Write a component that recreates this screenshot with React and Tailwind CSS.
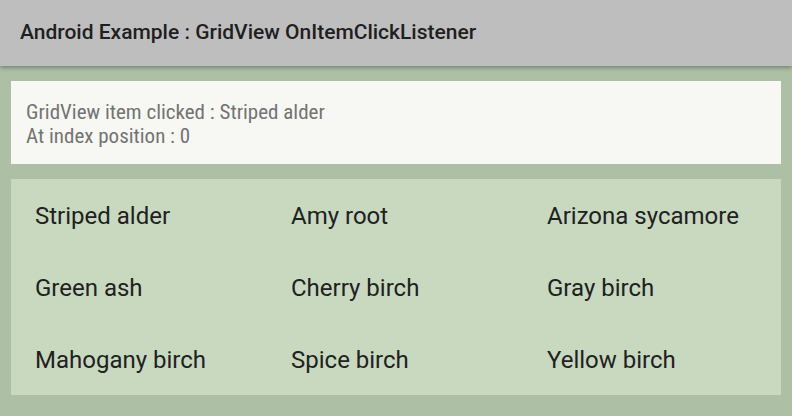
import React from "react";

const trees = [
  "Striped alder",
  "Amy root",
  "Arizona sycamore",
  "Green ash",
  "Cherry birch",
  "Gray birch",
  "Mahogany birch",
  "Spice birch",
  "Yellow birch",
];

export default function App() {
  return (
    <div className="w-[792px] h-[416px] bg-[#adc0a6] overflow-hidden font-['Roboto',sans-serif]">
      {/* Toolbar */}
      <div className="h-[66px] bg-[#bebebe] flex items-center pl-5 shadow-[0_2px_4px_rgba(0,0,0,0.3)] relative">
        <h1 className="text-[21px] font-medium text-[#1f1f1f]">
          Android Example : GridView OnItemClickListener
        </h1>
      </div>

      <div className="px-[11px] pt-[15px]">
        {/* Clicked info */}
        <div className="h-[83px] bg-[#f7f8f3] flex flex-col justify-center pl-[15px] pt-[2px] text-[21px] leading-[24px] text-[#737373] font-['Roboto_Condensed','Roboto',sans-serif] [font-stretch:condensed]">
          <p>GridView item clicked : Striped alder</p>
          <p>At index position : 0</p>
        </div>

        {/* Grid */}
        <div className="mt-[15px] h-[216px] bg-[#c8d9c0] grid grid-cols-[256px_256px_258px] grid-rows-3">
          {trees.map((t) => (
            <div key={t} className="flex items-center pl-6 pt-[2px] text-[24px] text-[#212121]">
              {t}
            </div>
          ))}
        </div>
      </div>
    </div>
  );
}
